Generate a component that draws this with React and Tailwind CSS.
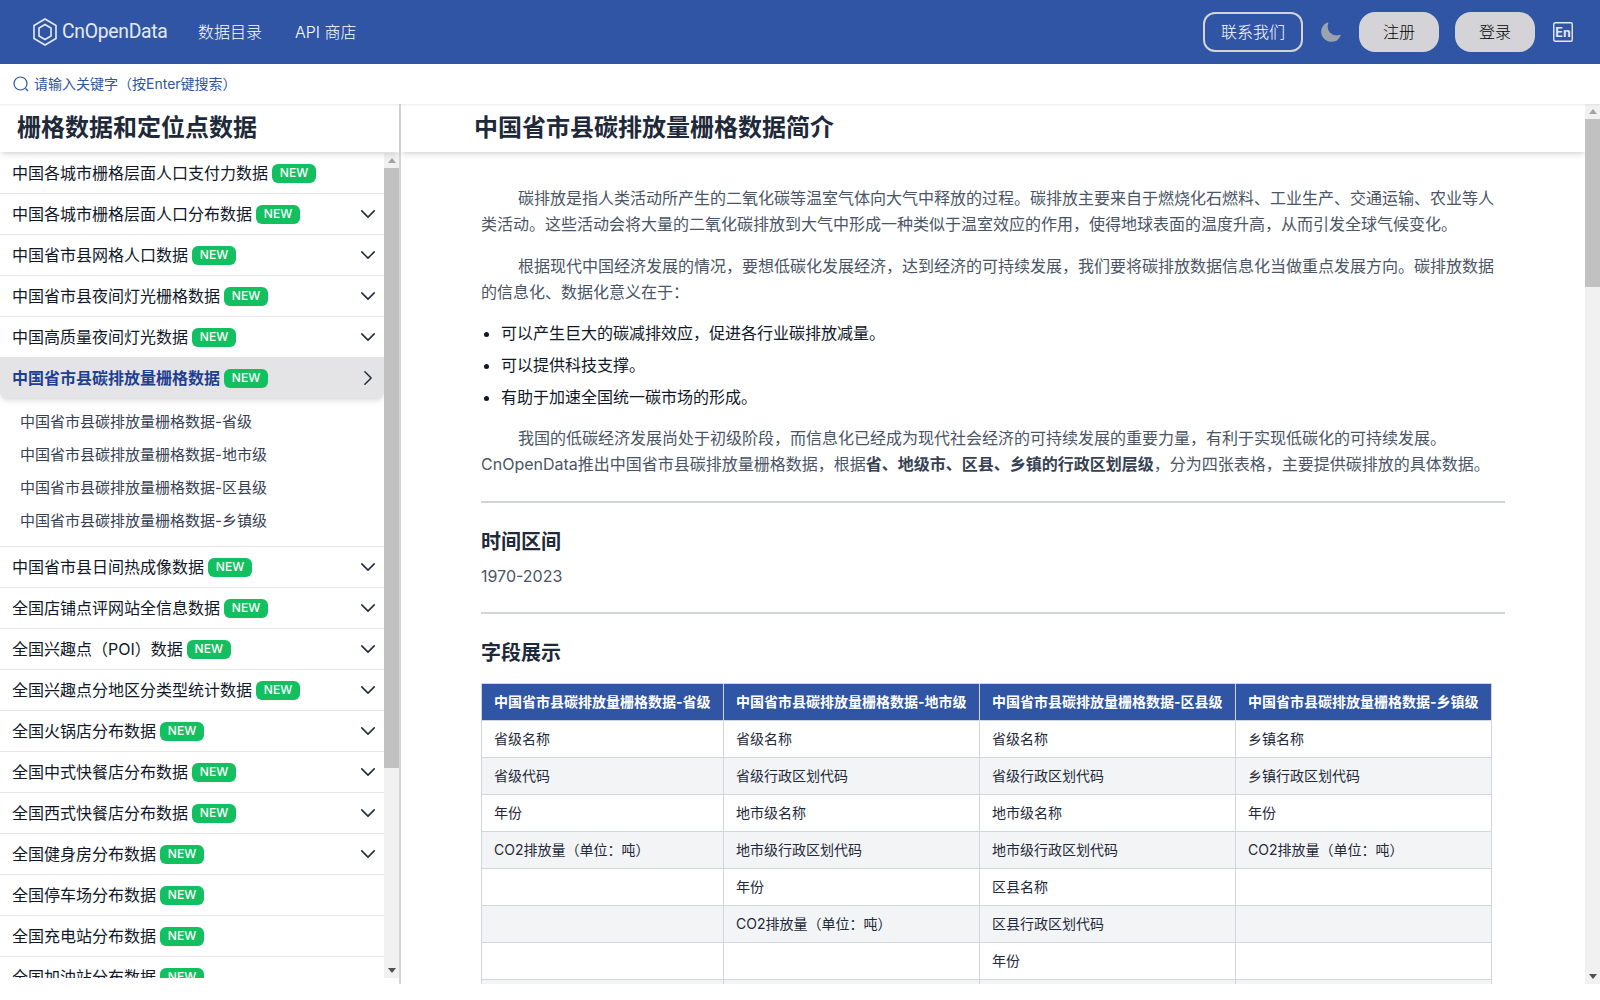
import React from "react";

const menu = [
  { name: "中国各城市栅格层面人口支付力数据" },
  { name: "中国各城市栅格层面人口分布数据", more: true },
  { name: "中国省市县网格人口数据", more: true },
  { name: "中国省市县夜间灯光栅格数据", more: true },
  { name: "中国高质量夜间灯光数据", more: true },
  {
    name: "中国省市县碳排放量栅格数据",
    active: true,
    children: [
      "中国省市县碳排放量栅格数据-省级",
      "中国省市县碳排放量栅格数据-地市级",
      "中国省市县碳排放量栅格数据-区县级",
      "中国省市县碳排放量栅格数据-乡镇级",
    ],
  },
  { name: "中国省市县日间热成像数据", more: true },
  { name: "全国店铺点评网站全信息数据", more: true },
  { name: "全国兴趣点（POI）数据", more: true },
  { name: "全国兴趣点分地区分类型统计数据", more: true },
  { name: "全国火锅店分布数据", more: true },
  { name: "全国中式快餐店分布数据", more: true },
  { name: "全国西式快餐店分布数据", more: true },
  { name: "全国健身房分布数据", more: true },
  { name: "全国停车场分布数据" },
  { name: "全国充电站分布数据" },
  { name: "全国加油站分布数据" },
];

const rows = [
  ["省级名称", "省级名称", "省级名称", "乡镇名称"],
  ["省级代码", "省级行政区划代码", "省级行政区划代码", "乡镇行政区划代码"],
  ["年份", "地市级名称", "地市级名称", "年份"],
  ["CO2排放量（单位：吨）", "地市级行政区划代码", "地市级行政区划代码", "CO2排放量（单位：吨）"],
  ["", "年份", "区县名称", ""],
  ["", "CO2排放量（单位：吨）", "区县行政区划代码", ""],
  ["", "", "年份", ""],
  ["", "", "CO2排放量（单位：吨）", ""],
  ["", "", "", ""],
];

const NewBadge = () => (
  <span className="ml-1 flex h-[19px] w-[44px] shrink-0 items-center justify-center rounded-md bg-[#12c060] text-xs font-medium text-white">
    NEW
  </span>
);

const Chevron = ({ open }) => (
  <svg
    viewBox="0 0 24 24"
    fill="none"
    stroke="#1f2937"
    strokeWidth="1.8"
    className="absolute right-[6px] top-[10px] h-5 w-5"
  >
    <path
      strokeLinecap="round"
      strokeLinejoin="round"
      d={open ? "M8.25 4.5l7.5 7.5-7.5 7.5" : "M19.5 8.25l-7.5 7.5-7.5-7.5"}
    />
  </svg>
);

const Logo = () => (
  <svg viewBox="0 0 24 28" fill="none" stroke="#e5e9f5" className="h-[28px] w-[24px]">
    <path strokeWidth="1.6" d="M12 1 23 7.5v13L12 27 1 20.500v-13z" />
    <path strokeWidth="1.6" d="M12 6.5 18 10v8l-6 3.500L6 18v-8z" />
  </svg>
);

const Scrollbar = ({ thumb }) => (
  <div className="flex w-[15px] shrink-0 flex-col items-center bg-[#f1f1f1]">
    <div className="flex h-[15px] w-full shrink-0 items-center justify-center">
      <span className="border-x-[4px] border-b-[5px] border-x-transparent border-b-[#a3a3a3]" />
    </div>
    <div className={thumb} />
    <div className="flex-1" />
    <div className="flex h-[15px] w-full shrink-0 items-center justify-center">
      <span className="border-x-[4px] border-t-[5px] border-x-transparent border-t-[#505050]" />
    </div>
  </div>
);

const App = () => {
  return (
    <div className="h-[1000px] overflow-hidden bg-white font-[Inter,'Noto_Sans_CJK_SC',sans-serif] text-base">
      <header className="flex h-16 items-center bg-[#2f55a4] pl-[33px] pr-[27px] text-white">
        <Logo />
        <span className="ml-[5px] w-[104px] origin-left scale-x-[0.92] whitespace-nowrap font-[Roboto,sans-serif] text-[21px] font-normal tracking-[-0.3px] text-[#e5e9f5]">
          CnOpenData
        </span>
        <a className="ml-8 font-light">数据目录</a>
        <a className="ml-[33px] font-light">API 商店</a>
        <div className="ml-auto flex items-center">
          <button className="h-10 w-[100px] rounded-xl border-2 border-zinc-300 font-light">联系我们</button>
          <svg viewBox="0 0 24 24" fill="#9ca3af" className="ml-4 h-[23px] w-[23px]">
            <path d="M9.528 1.718a.75.75 0 01.162.819A8.970 8.970 0 009 6a9 9 0 009 9 8.970 8.970 0 003.463-.69.75.75 0 01.981.980 10.503 10.503 0 01-9.694 6.460c-5.799 0-10.500-4.701-10.500-10.500 0-4.368 2.667-8.112 6.460-9.694a.75.75 0 01.818.162z" />
          </svg>
          <button className="ml-[17px] h-10 w-20 rounded-2xl bg-zinc-300 font-light text-black">注册</button>
          <button className="ml-4 h-10 w-20 rounded-2xl bg-zinc-300 font-light text-black">登录</button>
          <svg viewBox="0 0 20 20" className="ml-[18px] h-5 w-5">
            <rect x="0.75" y="0.75" width="18.500" height="18.500" rx="1.500" fill="none" stroke="#e5e9f5" strokeWidth="1.4" />
            <text x="10" y="14.500" textAnchor="middle" fontSize="12.500" fontWeight="700" fill="#e5e9f5">
              En
            </text>
          </svg>
        </div>
      </header>

      <div className="relative z-20 flex h-10 items-center pl-[13px] text-sm text-[#2f55a4] shadow-[0_1px_2px_rgba(0,0,0,0.08)]">
        <svg viewBox="0 0 16 16" fill="none" stroke="#2f55a4" strokeWidth="1.2" className="h-4 w-4">
          <circle cx="7.500" cy="7.500" r="6.500" />
          <path d="m12.500 12.500 2.500 2.500" />
        </svg>
        <span className="ml-[5px]">请输入关键字（按Enter键搜索）</span>
      </div>

      <div className="flex h-[880px]">
        <aside className="flex w-[401px] shrink-0 flex-col border-r-2 border-gray-300 pb-[6px]">
          <h2 className="relative z-10 flex h-12 shrink-0 items-center pl-[17px] text-2xl font-bold text-gray-800 shadow-md">
            栅格数据和定位点数据
          </h2>
          <div className="flex min-h-0 flex-1 pt-px">
            <nav className="flex-1 overflow-hidden">
              {menu.map((item) => (
                <div key={item.name} className="border-b border-gray-200">
                  <div
                    className={
                      item.active
                        ? "relative flex h-10 items-center rounded-b-md bg-zinc-200 pl-3 font-bold text-[#1e3f8f] shadow-md"
                        : "relative flex h-10 items-center pl-3 text-gray-900"
                    }
                  >
                    {item.name}
                    <NewBadge />
                    {item.more && <Chevron />}
                    {item.active && <Chevron open />}
                  </div>
                  {item.children && (
                    <ul className="py-[8px] pl-5 text-[15px] text-gray-700">
                      {item.children.map((c) => (
                        <li key={c} className="flex h-[33px] items-center">
                          {c}
                        </li>
                      ))}
                    </ul>
                  )}
                </div>
              ))}
            </nav>
            <Scrollbar thumb="h-[600px] w-full shrink-0 bg-[#c1c1c1]" />
          </div>
        </aside>

        <div className="flex min-w-0 flex-1">
          <main className="min-w-0 flex-1 overflow-hidden">
            <h1 className="relative z-10 flex h-12 items-center bg-white pl-[73px] text-2xl font-bold text-gray-800 shadow-md">
              中国省市县碳排放量栅格数据简介
            </h1>
            <article className="mx-auto w-[1024px] pt-[33px] text-gray-600">
              <p className="mb-4 indent-[37px] leading-[26px]">
                碳排放是指人类活动所产生的二氧化碳等温室气体向大气中释放的过程。碳排放主要来自于燃烧化石燃料、工业生产、交通运输、农业等人类活动。这些活动会将大量的二氧化碳排放到大气中形成一种类似于温室效应的作用，使得地球表面的温度升高，从而引发全球气候变化。
              </p>
              <p className="mb-4 indent-[37px] leading-[26px]">
                根据现代中国经济发展的情况，要想低碳化发展经济，达到经济的可持续发展，我们要将碳排放数据信息化当做重点发展方向。碳排放数据的信息化、数据化意义在于：
              </p>
              <ul className="mb-4 list-disc space-y-2 pl-5 text-gray-900">
                <li>可以产生巨大的碳减排效应，促进各行业碳排放减量。</li>
                <li>可以提供科技支撑。</li>
                <li>有助于加速全国统一碳市场的形成。</li>
              </ul>
              <p className="indent-[37px] leading-[26px]">
                我国的低碳经济发展尚处于初级阶段，而信息化已经成为现代社会经济的可持续发展的重要力量，有利于实现低碳化的可持续发展。CnOpenData推出中国省市县碳排放量栅格数据，根据
                <strong className="font-bold text-gray-700">省、地级市、区县、乡镇的行政区划层级</strong>
                ，分为四张表格，主要提供碳排放的具体数据。
              </p>
              <hr className="mb-[25px] mt-6 border-t-2 border-gray-300" />
              <h3 className="text-xl font-semibold text-gray-800">时间区间</h3>
              <p className="mt-2">1970-2023</p>
              <hr className="mb-[25px] mt-6 border-t-2 border-gray-300" />
              <h3 className="text-xl font-semibold text-gray-800">字段展示</h3>
              <table className="mt-4 w-[1011px] table-fixed border-collapse text-sm text-gray-800">
                <thead>
                  <tr className="h-[37px] bg-[#2f55a4] font-bold text-white">
                    <th className="w-[242px] border border-gray-300 px-3 text-left">中国省市县碳排放量栅格数据-省级</th>
                    <th className="w-[256px] border border-gray-300 px-3 text-left">中国省市县碳排放量栅格数据-地市级</th>
                    <th className="w-[256px] border border-gray-300 px-3 text-left">中国省市县碳排放量栅格数据-区县级</th>
                    <th className="border border-gray-300 px-3 text-left">中国省市县碳排放量栅格数据-乡镇级</th>
                  </tr>
                </thead>
                <tbody>
                  {rows.map((row, i) => (
                    <tr key={i} className="h-[37px] even:bg-gray-100">
                      {row.map((cell, j) => (
                        <td key={j} className="border border-gray-300 px-3">
                          {cell}
                        </td>
                      ))}
                    </tr>
                  ))}
                </tbody>
              </table>
            </article>
          </main>
          <Scrollbar thumb="h-[168px] w-full shrink-0 bg-[#c1c1c1]" />
        </div>
      </div>
    </div>
  );
};

export default App;
